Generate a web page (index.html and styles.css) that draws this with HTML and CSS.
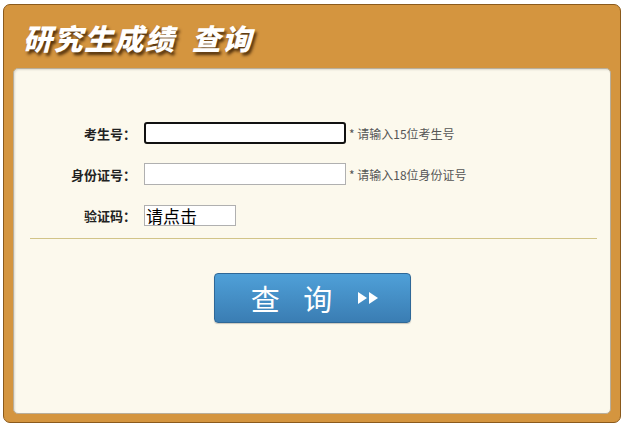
FILE: index.html
```html
<!DOCTYPE html>
<html lang="zh-CN">
<head>
    <meta charset="UTF-8">
    <title>研究生成绩查询</title>
    <link rel="stylesheet" href="styles.css">
</head>
<body>
    <div class="box">
        <div class="header">
            <h1 class="title">研究生成绩&nbsp;&nbsp;查询</h1>
        </div>
        <div class="panel">
            <form class="query-form">
                <div class="row">
                    <label class="label" for="ksbh">考生号：</label>
                    <input type="text" id="ksbh" class="field field-active">
                    <span class="hint">* 请输入15位考生号</span>
                </div>
                <div class="row">
                    <label class="label" for="zjhm">身份证号：</label>
                    <input type="text" id="zjhm" class="field">
                    <span class="hint">* 请输入18位身份证号</span>
                </div>
                <div class="row">
                    <label class="label" for="yzm">验证码：</label>
                    <input type="text" id="yzm" class="field field-code" value="请点击">
                </div>
            </form>
            <div class="divider"></div>
            <div class="actions">
                <button type="button" class="btn-query">
                    <span class="btn-text">查&nbsp;询</span>
                    <svg class="btn-icon" width="22" height="14" viewBox="0 0 22 14">
                        <polygon points="1,1 10,7 1,13" fill="#fff"/>
                        <polygon points="12,1 21,7 12,13" fill="#fff"/>
                    </svg>
                </button>
            </div>
        </div>
    </div>
</body>
</html>
```

FILE: styles.css
```css
body {
    margin: 0;
    background-color: #fff;
    font-family: 'Noto Sans CJK SC', 'Liberation Sans', sans-serif;
}
.box {
    box-sizing: border-box;
    width: 618px;
    height: 419px;
    margin: 4px 0 0 3px;
    padding: 0 9px 8px;
    display: flex;
    flex-direction: column;
    background-color: #d4953f;
    border: 1px solid #8b5a1c;
    border-radius: 7px;
}
.header {
    height: 63px;
    display: flex;
    align-items: center;
    padding-left: 10px;
}
.title {
    margin: 0;
    font-size: 29px;
    font-weight: 900;
    font-style: italic;
    color: #fff;
    text-shadow: 2px 3px 3px rgba(50, 25, 0, 0.8);
    letter-spacing: 1.5px;
}
.panel {
    flex: 1;
    background-color: #fcf9ed;
    border: 1px solid #b9ae9a;
    border-radius: 5px;
    box-shadow: inset 1px 1px 2px rgba(0, 0, 0, 0.12);
    padding-top: 53px;
}
.query-form {
    display: flex;
    flex-direction: column;
    gap: 19px;
}
.row {
    display: flex;
    align-items: center;
    height: 22px;
}
.label {
    width: 122px;
    text-align: right;
    font-size: 13px;
    font-weight: bold;
    color: #222;
}
.field {
    box-sizing: border-box;
    width: 202px;
    height: 22px;
    margin: 0 3px 0 8px;
    padding: 0 3px;
    border: 1px solid #b0b0b0;
    background-color: #fff;
    font-family: inherit;
    outline: none;
}
.field-active {
    border: 2px solid #111;
    border-radius: 3px;
}
.field-code {
    width: 92px;
    height: 21px;
    padding: 0 1px;
    font-size: 17px;
    line-height: 19px;
    color: #000;
}
.hint {
    font-size: 12px;
    color: #555;
}
.divider {
    height: 1px;
    margin: 12px 13px 0 16px;
    background-color: #d2c488;
}
.actions {
    display: flex;
    justify-content: center;
    padding-top: 34px;
}
.btn-query {
    box-sizing: border-box;
    width: 197px;
    height: 50px;
    display: flex;
    align-items: center;
    justify-content: center;
    gap: 25px;
    padding: 0 0 0 6px;
    background: linear-gradient(#4fa0d8, #3a7db3);
    border: 1px solid #2f6897;
    border-radius: 4px;
    box-shadow: 0 1px 1px rgba(0, 0, 0, 0.2);
    cursor: pointer;
}
.btn-text {
    font-family: 'Noto Sans CJK SC', sans-serif;
    font-size: 29px;
    color: #fff;
    word-spacing: 17px;
}
.btn-icon {
    display: block;
}
```
